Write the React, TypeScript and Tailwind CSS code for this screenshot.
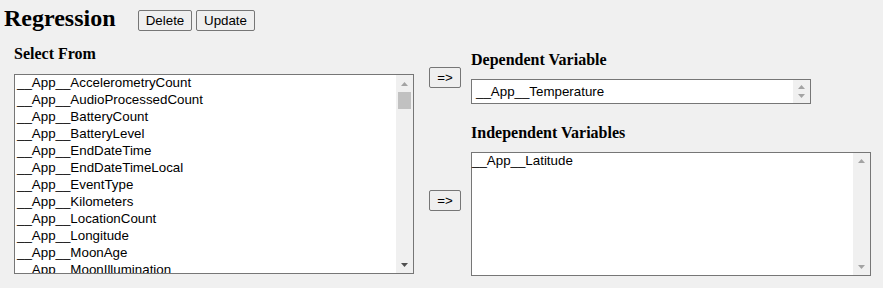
/**
 * Regression editor — pick a dependent variable and independent variables
 * from the list of available fields.
 */

const available = [
  "__App__AccelerometryCount",
  "__App__AudioProcessedCount",
  "__App__BatteryCount",
  "__App__BatteryLevel",
  "__App__EndDateTime",
  "__App__EndDateTimeLocal",
  "__App__EventType",
  "__App__Kilometers",
  "__App__LocationCount",
  "__App__Longitude",
  "__App__MoonAge",
  "__App__MoonIllumination",
];

const serif = "font-['Liberation_Serif','Times_New_Roman',serif]";
const sans = "font-['Liberation_Sans',Arial,sans-serif]";

function Arrow({ up, dark }: { up?: boolean; dark?: boolean }) {
  return (
    <svg width="7" height="4" viewBox="0 0 7 4" className="block">
      <polygon
        points={up ? "0,4 3.5,0 7,4" : "0,0 7,0 3.5,4"}
        fill={dark ? "#505050" : "#a3a3a3"}
      />
    </svg>
  );
}

function Btn({ label, className }: { label: string; className: string }) {
  return (
    <button
      className={`${sans} ${className} h-[21px] text-[13.33px] leading-[15px] text-black bg-[#efefef] border border-[#767676] rounded-[2px] flex items-center justify-center`}
    >
      {label}
    </button>
  );
}

export default function App() {
  return (
    <div className="w-full min-h-screen h-[288px] bg-[#f0f0f0] text-black">
      {/* Header */}
      <div className="flex items-start h-[41px]">
        <h2 className={`${serif} font-bold text-[24px] leading-[28px] mt-[4px] ml-[4px] w-[112px]`}>
          Regression
        </h2>
        <div className="flex gap-[4px] mt-[10px] ml-[22px]">
          <Btn label="Delete" className="w-[54px]" />
          <Btn label="Update" className="w-[59px]" />
        </div>
      </div>

      <div className="flex items-start">
        {/* Available fields */}
        <div className="ml-[14px] w-[400px]">
          <div className={`${serif} font-bold text-[16px] leading-[18px] h-[18px] mt-[4px]`}>
            Select From
          </div>
          <div className="mt-[11px] h-[200px] border border-[#767676] bg-white flex overflow-hidden">
            <div className={`${sans} flex-1 text-[13.33px] overflow-hidden pl-[2px]`}>
              {available.map(name => (
                <div key={name} className="h-[17px] leading-[15px] pb-[2px] whitespace-nowrap">
                  {name}
                </div>
              ))}
            </div>
            <div className="w-[17px] bg-[#f0f0f0] flex flex-col items-center">
              <div className="h-[17px] flex items-center justify-center">
                <Arrow up />
              </div>
              <div className="w-[13px] h-[17px] bg-[#c1c1c1]" />
              <div className="flex-1" />
              <div className="h-[17px] flex items-center justify-center">
                <Arrow dark />
              </div>
            </div>
          </div>
        </div>

        {/* Move buttons */}
        <div className="ml-[15px] flex flex-col">
          <Btn label="=>" className="w-[32px] mt-[26px]" />
          <Btn label="=>" className="w-[32px] mt-[102px]" />
        </div>

        {/* Targets */}
        <div className="ml-[10px] flex flex-col">
          <div className={`${serif} font-bold text-[16px] leading-[18px] h-[18px] mt-[10px]`}>
            Dependent Variable
          </div>
          <div className="mt-[10px] w-[340px] h-[25px] border border-[#767676] bg-white flex">
            <div className={`${sans} flex-1 text-[13.33px] leading-[15px] pl-[4px] pt-[4px] whitespace-nowrap`}>
              __App__Temperature
            </div>
            <div className="w-[17px] bg-[#f0f0f0] flex flex-col items-center justify-center gap-[5px]">
              <Arrow up />
              <Arrow />
            </div>
          </div>

          <div className={`${serif} font-bold text-[16px] leading-[18px] h-[18px] mt-[20px]`}>
            Independent Variables
          </div>
          <div className="mt-[10px] w-[400px] h-[124px] border border-[#767676] bg-white flex">
            <div className={`${sans} flex-1 text-[13.33px]`}>
              <div className="h-[17px] leading-[15px] pb-[2px] whitespace-nowrap">__App__Latitude</div>
            </div>
            <div className="w-[17px] bg-[#f0f0f0] flex flex-col items-center justify-between py-[6px]">
              <Arrow up />
              <Arrow />
            </div>
          </div>
        </div>
      </div>
    </div>
  );
}
